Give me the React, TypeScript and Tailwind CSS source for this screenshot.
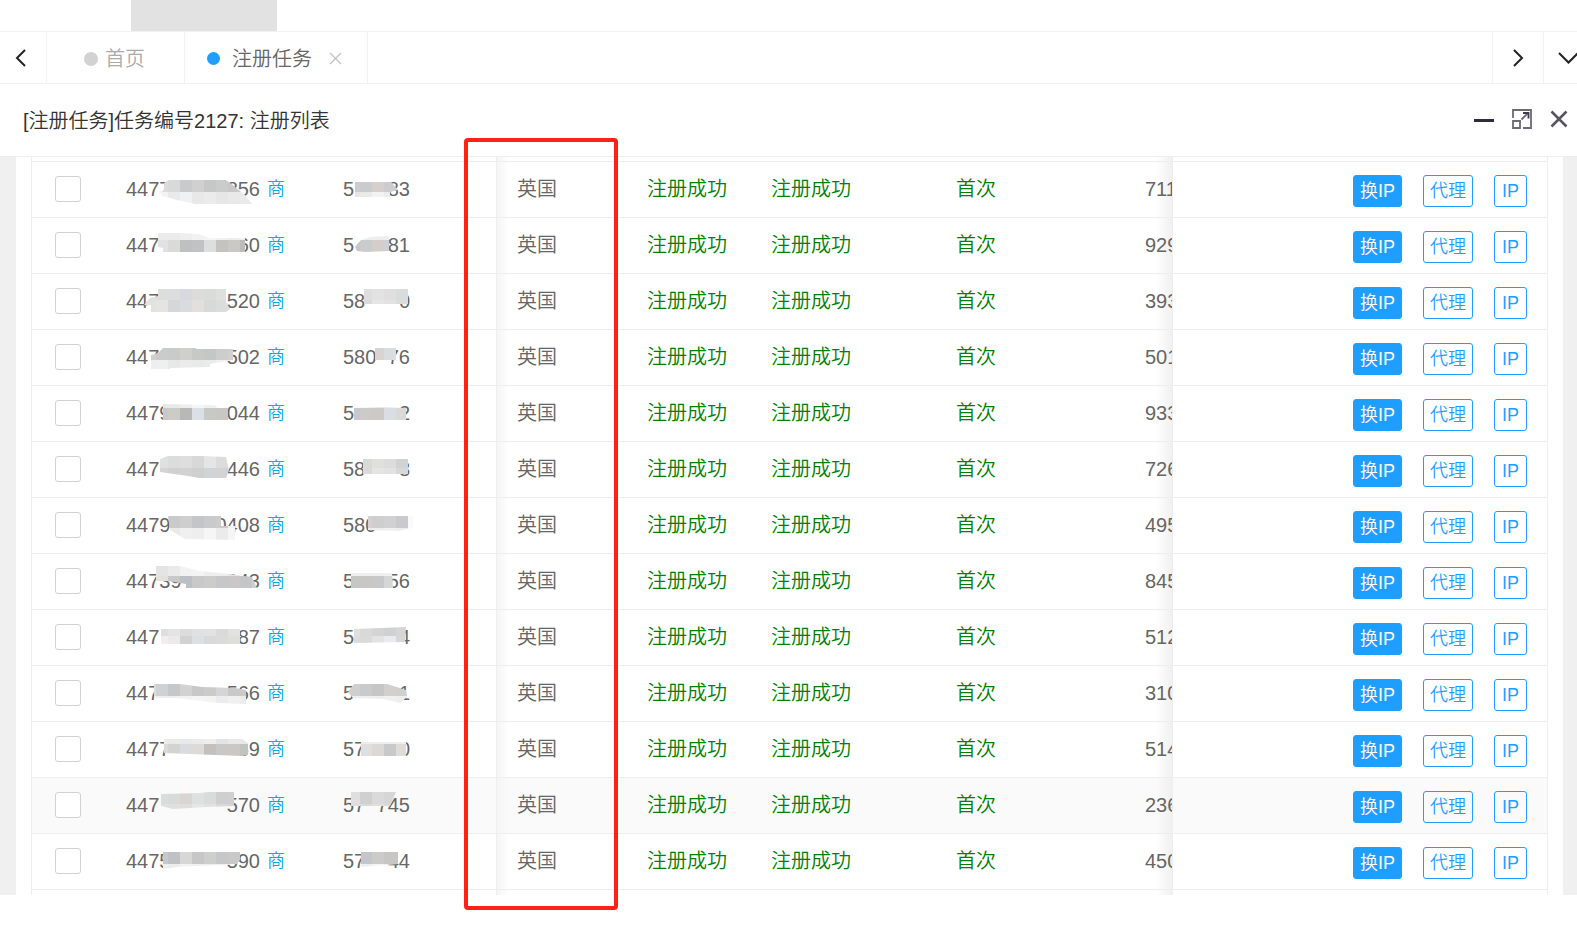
import { useId, useState } from 'react';
import clsx from 'clsx';

type Shade = { points: string; top: number; colors: string[][] };

type Row = {
  phone: [string, string];
  phoneShade: Shade;
  id: [string, string];
  idShade: Shade;
  batch: string;
};

// The middle of phone numbers and ids is hidden, only both ends are kept
const rows: Row[] = [
  {
    phone: ['4477', '856'],
    phoneShade: {
      points: '33,31 38,30 38,22 43,19 100,19 109,26 119,34 126,43 69,43 51,39 37,35',
      top: 19,
      colors: [
        ['#ddd', '#dcdbda', '#d8d9d9', '#c9cacc', '#d0d0d0', '#c6c8c8', '#cacbcb', '#c8c8c8', '#d2d2d2'],
        ['#eee', '#f3f3f3', '#eaeaea', '#eff2f2', '#e8e8e8', '#ebebeb', '#e6e6e6', '#e9e9e9', '#eaeaea', '#ebebeb'],
      ],
    },
    id: ['5', '83'],
    idShade: { points: '12,21 48,21 55,29 47,31 47,36 12,36', top: 19, colors: [['#ccc', '#c9cbcc', '#d5d0ce', '#ccc', '#d5d5d5'], ['#e6e6e6', '#eaeaea', '#f3f3f3', '#ececec', '#ececec']] },
    batch: '711',
  },
  {
    phone: ['447', '560'],
    phoneShade: {
      points: '32,16 54,16 73,17 84,21 119,21 119,35 37,35 37,31 32,30',
      top: 11,
      colors: [
        ['#ebebeb', '#ebebeb', '#ebebeb', '#eee', '#f2f2f2', '#f4f4f4', '#f1f1f1', '#eee', '#eee'],
        ['#e0e2e3', '#e0e2e3', '#dadad8', '#bfc0c1', '#c0c2c4', '#dddfdf', '#c4c3c0', '#cbc9c5', '#bcbcba'],
      ],
    },
    id: ['5', '81'],
    idShade: { points: '12,30 18,23 27,20 46,19 46,34 22,35 14,34', top: 11, colors: [['#eee', '#eee', '#eee', '#eee'], ['#c4c6c8', '#c9cbcc', '#d3cecc', '#cfcfcf', '#ccc']] },
    batch: '929',
  },
  {
    phone: ['447', '520'],
    phoneShade: {
      points: '32,16 100,16 100,29 104,36 100,39 25,39 25,32 18,32 24,25 32,23',
      top: 15,
      colors: [
        ['#e0e0e0', '#dcdddd', '#dcdddd', '#d7d9de', '#dcdcda', '#dadcda', '#dfdfdd', '#e0e0e0'],
        ['#e2e2e1', '#e6e4e2', '#d5d7d8', '#d9dbdf', '#e2e0df', '#d8dad9', '#dbdcdc', '#ddd'],
      ],
    },
    id: ['58', '0'],
    idShade: { points: '21,16 65,16 65,31 21,31', top: 15, colors: [['#e0e0e0', '#dedede', '#e2e2e2', '#dfdfdf', '#d9dcdc'], ['#e2e2e2', '#dadada', '#e5e5e5', '#e2e2e2', '#dcdcdc']] },
    batch: '393',
  },
  {
    phone: ['447', '502'],
    phoneShade: {
      points: '25,26 32,24 37,19 70,19 70,20 107,20 107,31 84,35 84,38 44,39 44,40 25,40',
      top: 19,
      colors: [
        ['#d0d0d0', '#cacbcb', '#c9caca', '#cfcfcd', '#c7c9c7', '#c5c7c6', '#cdcdcc', '#d3cfce'],
        ['#eee', '#efefef', '#e6e7e7', '#ebebeb', '#e8eae9', '#ebebeb', '#f0f0f0', '#eee'],
      ],
    },
    id: ['580', '76'],
    idShade: { points: '32,19 53,19 53,31 32,31', top: 19, colors: [['#d9d4d3', '#d9d4d3', '#d9d4d3', '#dadcde', '#dadcde']] },
    batch: '501',
  },
  {
    phone: ['4479', '044'],
    phoneShade: {
      points: '37,19 89,20 91,23 102,23 102,35 37,35',
      top: 11,
      colors: [
        ['#e5e5e5', '#e7e7e7', '#e9e9e9', '#eee', '#f3f5f6', '#efefef', '#eee', '#e0e0e0'],
        ['#c9c8c6', '#c9c8c6', '#cdcbc8', '#b8b8b8', '#dbe0e6', '#c8c8c5', '#c8c7c6', '#c4c4c4'],
      ],
    },
    id: ['5', '2'],
    idShade: { points: '11,23 39,22 63,23 63,35 11,35', top: 11, colors: [['#e8e8e8', '#e8e8e8', '#e8e8e8', '#e8e8e8', '#e8e8e8'], ['#c5c9cc', '#cbcbcb', '#cdc9c7', '#dadde1', '#dad9d8']] },
    batch: '933',
  },
  {
    phone: ['447', '446'],
    phoneShade: {
      points: '34,18 42,15 76,15 100,16 103,29 100,37 73,37 62,35 34,31',
      top: 15,
      colors: [
        ['#e0e2e1', '#dfe1e0', '#dcdcdc', '#dedede', '#d8d8d8', '#e3e6e5', '#dcdcdc', '#dadada'],
        ['#d3d5d5', '#d3d5d5', '#d0d0d0', '#d2d2d2', '#cfcfcf', '#d0d4d6', '#d3d3d3', '#d8d8d8'],
      ],
    },
    id: ['58', '8'],
    idShade: { points: '20,18 65,18 66,33 20,33', top: 15, colors: [['#dfdfdf', '#d8dada', '#e0dfdd', '#dcdcdc', '#d0d2d4'], ['#e2e2e2', '#dadada', '#e5e5e5', '#e2e2e2', '#d7d7d7']] },
    batch: '726',
  },
  {
    phone: ['4479', '0408'],
    phoneShade: {
      points: '42,19 95,19 95,29 109,29 109,43 59,42 44,33',
      top: 19,
      colors: [
        ['#cacaca', '#cacaca', '#cacaca', '#cecece', '#c3c5c8', '#c8cacc', '#ccc', '#f0f0f0'],
        ['#eee', '#eee', '#eaeaea', '#f0f0f0', '#eee', '#f6f6f6', '#ebebeb', '#f6f6f6'],
      ],
    },
    id: ['580', ''],
    idShade: { points: '25,19 70,19 70,31 55,34 25,33', top: 19, colors: [['#d4d1d0', '#d4d1d0', '#cecece', '#d1d0d2', '#c9cacb', '#fafafa'], ['#ececec', '#ececec', '#eee', '#f0f0f0', '#eee', '#fafafa']] },
    batch: '495',
  },
  {
    phone: ['44739', '043'],
    phoneShade: {
      points: '30,13 54,13 74,18 104,21 126,24 131,35 60,35 60,31 42,28 30,28',
      top: 11,
      colors: [
        ['#e4e4e4', '#e4e4e4', '#eaeaea', '#f2f2f2', '#f4f4f4', '#eee', '#eee', '#e5e5e5'],
        ['#e3e1de', '#e3e1de', '#c8c8c8', '#bcc0c6', '#c9c9c9', '#ccccca', '#c5c7c8', '#cac8c7', '#c3c5c7', '#cfcfcf'],
      ],
    },
    id: ['5', '156'],
    idShade: { points: '8,20 49,20 50,35 8,35', top: 11, colors: [['#eee', '#eee', '#eee', '#f0f0f0'], ['#c6c6c6', '#c9c7c6', '#c6c8c9', '#d6d6d6', '#dadada']] },
    batch: '845',
  },
  {
    phone: ['447', '87'],
    phoneShade: {
      points: '35,20 114,20 114,35 35,35',
      top: 15,
      colors: [
        ['#e0e0e0', '#dfdfdf', '#e4e4e4', '#dcdcdc', '#e0e2e1', '#e2e2e2', '#dadada', '#e1e3e2'],
        ['#eee', '#f0eeee', '#ebe9ea', '#d2d2d2', '#dde0e1', '#d8d9d9', '#dbdbdb', '#dfdedc'],
      ],
    },
    id: ['5', '4'],
    idShade: { points: '11,20 63,18 62,33 11,34', top: 15, colors: [['#dfdfdf', '#d8dada', '#d4d4d4', '#d0d2d2', '#d6d6d6'], ['#dcdcdc', '#dadada', '#e3e3e3', '#ebebef', '#d7d7d7']] },
    batch: '512',
  },
  {
    phone: ['447', '566'],
    phoneShade: {
      points: '28,19 54,19 76,22 109,23 120,25 120,39 91,38 51,33 28,33',
      top: 19,
      colors: [
        ['#dcdcdc', '#cfd1d2', '#c5c7c9', '#d2d2d2', '#c8c8c8', '#cbcbcb', '#d3d5d6', '#c9c9c9', '#cdc9c6'],
        ['#f0f0f0', '#eee', '#eee', '#f2f2f2', '#f5f5f5', '#f3f3f3', '#ececec', '#f0f0f0', '#ebebeb'],
      ],
    },
    id: ['5', '1'],
    idShade: { points: '5,27 11,19 44,19 63,25 64,32 57,38 40,34 10,33', top: 19, colors: [['#cfcfcf', '#c9cacb', '#c6c6c6', '#d2d0ce', '#cfcfcf'], ['#eee', '#eee', '#eee', '#f0f0f0', '#eee']] },
    batch: '310',
  },
  {
    phone: ['4477', '69'],
    phoneShade: {
      points: '38,18 116,18 122,22 122,34 116,35 38,32',
      top: 11,
      colors: [
        ['#ececec', '#ececec', '#eaeaea', '#e6e8e9', '#ebebeb', '#eee', '#e3e3e3', '#e8e8e8', '#e8e8e8'],
        ['#d9dad9', '#d9dad9', '#d3d3d2', '#d9dcdf', '#dddbd9', '#c3c1be', '#c8c8c8', '#cac8c5', '#c1c3bf'],
      ],
    },
    id: ['577', '0'],
    idShade: { points: '18,21 63,21 63,35 18,35', top: 11, colors: [['#eee', '#eee', '#eee', '#eee', '#eee'], ['#e0e2e3', '#dfdfdf', '#dad9d8', '#c9c9c9', '#dedbd9']] },
    batch: '514',
  },
  {
    phone: ['447', '570'],
    phoneShade: {
      points: '35,17 74,16 82,15 108,15 108,29 81,30 47,32 35,29',
      top: 15,
      colors: [
        ['#dadada', '#dadcdd', '#d9dbdb', '#d9d5d3', '#dfe1e1', '#dadcdc', '#cfcfcf', '#d0d0d0'],
        ['#e0e0e0', '#e0e0e0', '#dfdfdf', '#dedede', '#e6e6e6', '#e2e2e2', '#d9d9d9', '#d5d5d5'],
      ],
    },
    id: ['57', '745'],
    idShade: { points: '8,15 53,15 47,29 8,29', top: 15, colors: [['#dfdfdf', '#cfd1d1', '#dbdada', '#d6d6d6', '#d6d6d6'], ['#dfdfdf', '#dadada', '#dfdfdf', '#dadada', '#ddd']] },
    batch: '236',
  },
  {
    phone: ['4475', '590'],
    phoneShade: {
      points: '37,19 114,19 116,24 111,31 94,32 51,34 37,36',
      top: 19,
      colors: [
        ['#ccc', '#c6c8c9', '#bfc2c5', '#d7d7d5', '#c7c7c7', '#cdcfcf', '#c5c7c8', '#c9c9c9'],
        ['#eee', '#eee', '#ececec', '#f2f2f2', '#f0f0f0', '#eee', '#eee', '#eee'],
      ],
    },
    id: ['57', '44'],
    idShade: { points: '18,19 55,19 55,31 18,34', top: 19, colors: [['#cfcfcf', '#c3c5c8', '#cdcaca', '#c8c6c5', '#c8c6c5'], ['#eee', '#eee', '#f4f4f4', '#eee', '#eee']] },
    batch: '450',
  },
];

const edgeLeft = 'border-l border-l-[#eee] bg-[linear-gradient(to_right,#f5f5f5,transparent_12px)]';
const edgeRight = 'bg-[linear-gradient(to_left,#f0f0f0,transparent_16px)]';

function Mosaic({ shade, start, end }: { shade: Shade; start: number; end: number }) {
  const clipId = useId();
  return (
    <svg className="absolute top-0 left-0 overflow-visible" width={end} height="56" viewBox={`0 1 ${end} 56`} aria-hidden="true">
      <clipPath id={clipId}>
        <polygon points={shade.points} />
      </clipPath>
      <g clipPath={`url(#${clipId})`} shapeRendering="crispEdges">
        {shade.colors.map((band, r) =>
          band.map((color, c) => (
            <rect key={`${r}-${c}`} x={start + c * 12} y={shade.top + r * 12} width="12" height="12" fill={color} />
          ))
        )}
      </g>
    </svg>
  );
}

function ActionButton({ label, primary }: { label: string; primary?: boolean }) {
  return (
    <button
      type="button"
      className={clsx(
        'h-8 min-w-[33px] rounded-[3px] border border-[#1e9fff] px-[6px] text-lg leading-7 whitespace-nowrap',
        primary ? 'bg-[#1e9fff] text-white' : 'text-[#1e9fff]'
      )}
    >
      {label}
    </button>
  );
}

function SpacerRow({ line }: { line?: boolean }) {
  const base = clsx('h-[5px] p-0', line && 'border-b border-b-[#eee]');
  return (
    <tr aria-hidden="true">
      <td className={base} colSpan={3}></td>
      <td className={clsx(base, edgeLeft)}></td>
      <td className={base} colSpan={3}></td>
      <td className={clsx(base, edgeRight)}></td>
      <td className={clsx(base, 'border-l border-l-[#eee]')}></td>
    </tr>
  );
}

function TaskTable() {
  const [checked, setChecked] = useState<number[]>([]);

  const toggle = (i: number) => {
    setChecked(checked.includes(i) ? checked.filter((n) => n !== i) : [...checked, i]);
  };

  return (
    <table className="w-full table-fixed border-separate border-spacing-0 border-x border-[#eee] text-xl leading-7 text-[#666]">
      <colgroup>
        <col className="w-[74px]" />
        <col className="w-[217px]" />
        <col className="w-[173px]" />
        <col className="w-[131px]" />
        <col className="w-[124px]" />
        <col className="w-[185px]" />
        <col className="w-[189px]" />
        <col className="w-[47px]" />
        <col />
      </colgroup>
      <tbody>
        <SpacerRow line />
        {rows.map((row, i) => {
          const cell = 'h-14 border-b border-b-[#eee] p-0 pb-[2px] pl-5 whitespace-nowrap';
          return (
            <tr key={i} className={i === 11 ? 'bg-[#fafafa]' : 'hover:bg-[#fafafa]'}>
              <td className={cell}>
                <input
                  type="checkbox"
                  aria-label={`${row.phone[0]} ${row.phone[1]}`}
                  checked={checked.includes(i)}
                  onChange={() => toggle(i)}
                  className="ml-[3px] block size-[26px] appearance-none rounded-[3px] border border-[#d2d2d2] bg-white checked:bg-[#1e9fff]"
                />
              </td>
              <td className={cell}>
                <div className="relative flex h-[53px] items-center gap-[7px]">
                  <span className="flex w-[134px] justify-between">
                    <span>{row.phone[0]}</span>
                    <span>{row.phone[1]}</span>
                  </span>
                  <a href="#" className="text-lg leading-7 text-[#01aaed]">商</a>
                  <Mosaic shade={row.phoneShade} start={18} end={134} />
                </div>
              </td>
              <td className={cell}>
                <div className="relative flex h-[53px] w-[67px] items-center justify-between">
                  <span>{row.id[0]}</span>
                  <span>{row.id[1]}</span>
                  <Mosaic shade={row.idShade} start={5} end={67} />
                </div>
              </td>
              <td className={clsx(cell, edgeLeft)}>英国</td>
              <td className={clsx(cell, 'text-[#008000]')}>注册成功</td>
              <td className={clsx(cell, 'text-[#008000]')}>注册成功</td>
              <td className={clsx(cell, 'text-[#008000]')}>首次</td>
              <td className={clsx(cell, edgeRight, 'overflow-hidden')}>{row.batch}</td>
              <td className={clsx(cell, 'border-l border-l-[#eee] pr-5')}>
                <div className="flex justify-end gap-[21px] pt-1">
                  <ActionButton label="换IP" primary />
                  <ActionButton label="代理" />
                  <ActionButton label="IP" />
                </div>
              </td>
            </tr>
          );
        })}
        <SpacerRow />
      </tbody>
    </table>
  );
}

function TabBar() {
  return (
    <nav className="flex h-[53px] border-y border-[#f2f2f2] text-xl">
      <button type="button" aria-label="prev" className="flex w-[47px] items-center border-r border-[#f2f2f2] pl-[15px]">
        <svg width="11" height="18" viewBox="0 0 11 18" fill="none" stroke="#222" strokeWidth="2">
          <path d="M10 1 2 9l8 8" />
        </svg>
      </button>
      <a href="#" className="flex w-[138px] items-center gap-[7px] border-r border-[#f2f2f2] pt-[2px] pl-[37px] text-[#aaa]">
        <span className="size-[14px] rounded-full bg-[#d2d2d2]"></span>
        首页
      </a>
      <div className="flex w-[183px] items-center border-r border-[#f2f2f2] pt-[2px] pl-[22px] text-[#666]">
        <a href="#" className="flex items-center gap-3">
          <span className="size-[13px] rounded-full bg-[#1e9fff]"></span>
          注册任务
        </a>
        <button type="button" aria-label="close tab" className="ml-[17px]">
          <svg width="13" height="13" viewBox="0 0 13 13" fill="none" stroke="#c2c2c2" strokeWidth="1.3">
            <path d="m1 1 11 11M12 1 1 12" />
          </svg>
        </button>
      </div>
      <div className="flex-1"></div>
      <button type="button" aria-label="next" className="flex w-[51px] items-center border-l border-[#f2f2f2] pl-5">
        <svg width="11" height="18" viewBox="0 0 11 18" fill="none" stroke="#222" strokeWidth="2">
          <path d="m1 1 8 8-8 8" />
        </svg>
      </button>
      <button type="button" aria-label="more" className="flex w-[34px] items-center overflow-hidden border-l border-[#f2f2f2] pl-[14px]">
        <svg className="shrink-0" width="21" height="12" viewBox="0 0 21 12" fill="none" stroke="#222" strokeWidth="2">
          <path d="m1 1 9.500 9.500L20 1" />
        </svg>
      </button>
    </nav>
  );
}

function WindowTitle() {
  return (
    <header className="flex h-[73px] items-center justify-between border-b border-[#eee] pr-[9px] pl-[23px]">
      <h1 className="pt-[2px] text-xl text-[#333]">[注册任务]任务编号2127: 注册列表</h1>
      <div className="flex items-center gap-[18px] pb-[2px]">
        <button type="button" aria-label="minimize">
          <svg className="block" width="20" height="20" viewBox="0 0 20 20">
            <path d="M0 11.500h20" stroke="#2e2d3c" strokeWidth="3" />
          </svg>
        </button>
        <button type="button" aria-label="maximize">
          <svg className="block" width="20" height="20" viewBox="0 0 20 20" fill="none" stroke="#6b6a75" strokeWidth="1.8">
            <path d="M1 9V1h18v18h-8" />
            <path d="M1 12h7v7H1z" />
            <path d="m9.500 10.500 6.500-6.500" />
            <path d="M11 4h5.500v5.500" stroke="#3e3d4b" />
          </svg>
        </button>
        <button type="button" aria-label="close">
          <svg className="block" width="18" height="18" viewBox="0 0 18 18" fill="none" stroke="#55545f" strokeWidth="2.500">
            <path d="m1.500 1.500 15 15M16.500 1.500l-15 15" />
          </svg>
        </button>
      </div>
    </header>
  );
}

export default function App() {
  return (
    <div className="min-h-screen overflow-x-hidden bg-white font-['Liberation_Sans','Noto_Sans_CJK_SC',sans-serif] font-[350]">
      <div className="ml-[131px] h-[31px] w-[146px] bg-[#e2e2e2]"></div>
      <TabBar />
      <WindowTitle />
      <main className="relative border-r-[14px] border-l-[16px] border-[#f0f0f0] px-[15px]">
        <TaskTable />
        {/* highlight around the country column */}
        <div className="pointer-events-none absolute -top-[19px] -bottom-[15px] left-[448px] w-[154px] rounded-[4px] border-4 border-[#ff2113]"></div>
      </main>
    </div>
  );
}
